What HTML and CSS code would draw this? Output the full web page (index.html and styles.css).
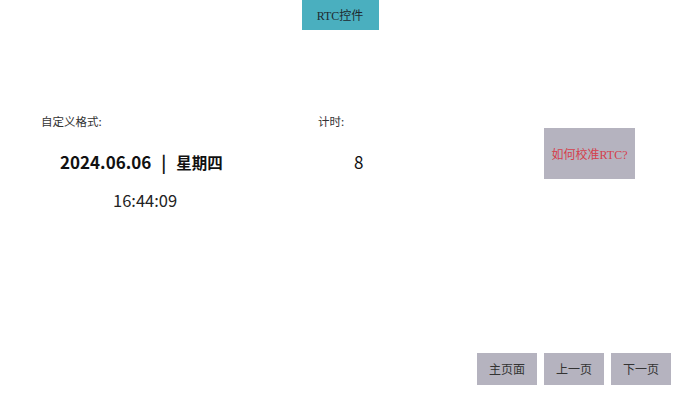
FILE: index.html
```html
<!DOCTYPE html>
<html lang="zh">
<head>
<meta charset="utf-8">
<title>RTC控件</title>
<link rel="stylesheet" href="styles.css">
</head>
<body>
<div class="page">
  <header class="header">
    <div class="title">RTC控件</div>
  </header>
  <main class="main">
    <section class="col col-left">
      <div class="label">自定义格式:</div>
      <div class="date">2024.06.06<span class="sep">|</span><span class="week">星期四</span></div>
      <div class="time">16:44:09</div>
    </section>
    <section class="col col-mid">
      <div class="label">计时:</div>
      <div class="count">8</div>
    </section>
    <section class="col col-right">
      <button class="btn help">如何校准RTC?</button>
    </section>
  </main>
  <footer class="footer">
    <button class="btn nav">主页面</button>
    <button class="btn nav">上一页</button>
    <button class="btn nav">下一页</button>
  </footer>
</div>
</body>
</html>
```
FILE: styles.css
```css
html, body {
  margin: 0;
  padding: 0;
  background: #ffffff;
}
.page {
  width: 680px;
  height: 398px;
  display: flex;
  flex-direction: column;
  font-family: "Noto Sans CJK SC", "Noto Sans", sans-serif;
  color: #222;
}
.header {
  display: flex;
  justify-content: center;
  height: 30px;
}
.title {
  width: 77px;
  height: 30px;
  background: #4aafbf;
  color: #1e2a30;
  font-family: "Liberation Serif", "Noto Sans CJK SC", serif;
  font-size: 12px;
  display: flex;
  align-items: center;
  justify-content: center;
}
.main {
  display: flex;
  padding-top: 85px;
  padding-left: 41px;
  height: 150px;
}
.col {
  display: flex;
  flex-direction: column;
}
.col-left {
  width: 277px;
}
.col-mid {
  width: 226px;
}
.label {
  font-size: 11.5px;
  line-height: 12px;
  color: #333;
}
.date {
  margin-top: 23px;
  margin-left: 19px;
  font-size: 17px;
  font-weight: bold;
  line-height: 24px;
  color: #111;
  white-space: nowrap;
  display: flex;
  align-items: baseline;
}
.sep {
  margin: 0 10px 0 10px;
}
.week {
  font-size: 15.5px;
}
.time {
  margin-top: 15px;
  margin-left: 72px;
  font-size: 16.5px;
  line-height: 22px;
  color: #222;
}
.count {
  margin-top: 23px;
  margin-left: 36px;
  font-size: 17px;
  line-height: 24px;
  color: #111;
}
.btn {
  border: none;
  background: #b5b3bf;
  font-family: "Liberation Serif", "Noto Sans CJK SC", serif;
  padding: 0;
  margin: 0;
}
.help {
  margin-top: 13px;
  width: 91px;
  height: 51px;
  font-size: 12px;
  color: #d4404c;
}
.footer {
  margin-top: auto;
  display: flex;
  justify-content: flex-end;
  gap: 7px;
  padding-right: 9px;
  padding-bottom: 13px;
}
.nav {
  width: 60px;
  height: 32px;
  font-size: 12px;
  color: #333;
}
```
